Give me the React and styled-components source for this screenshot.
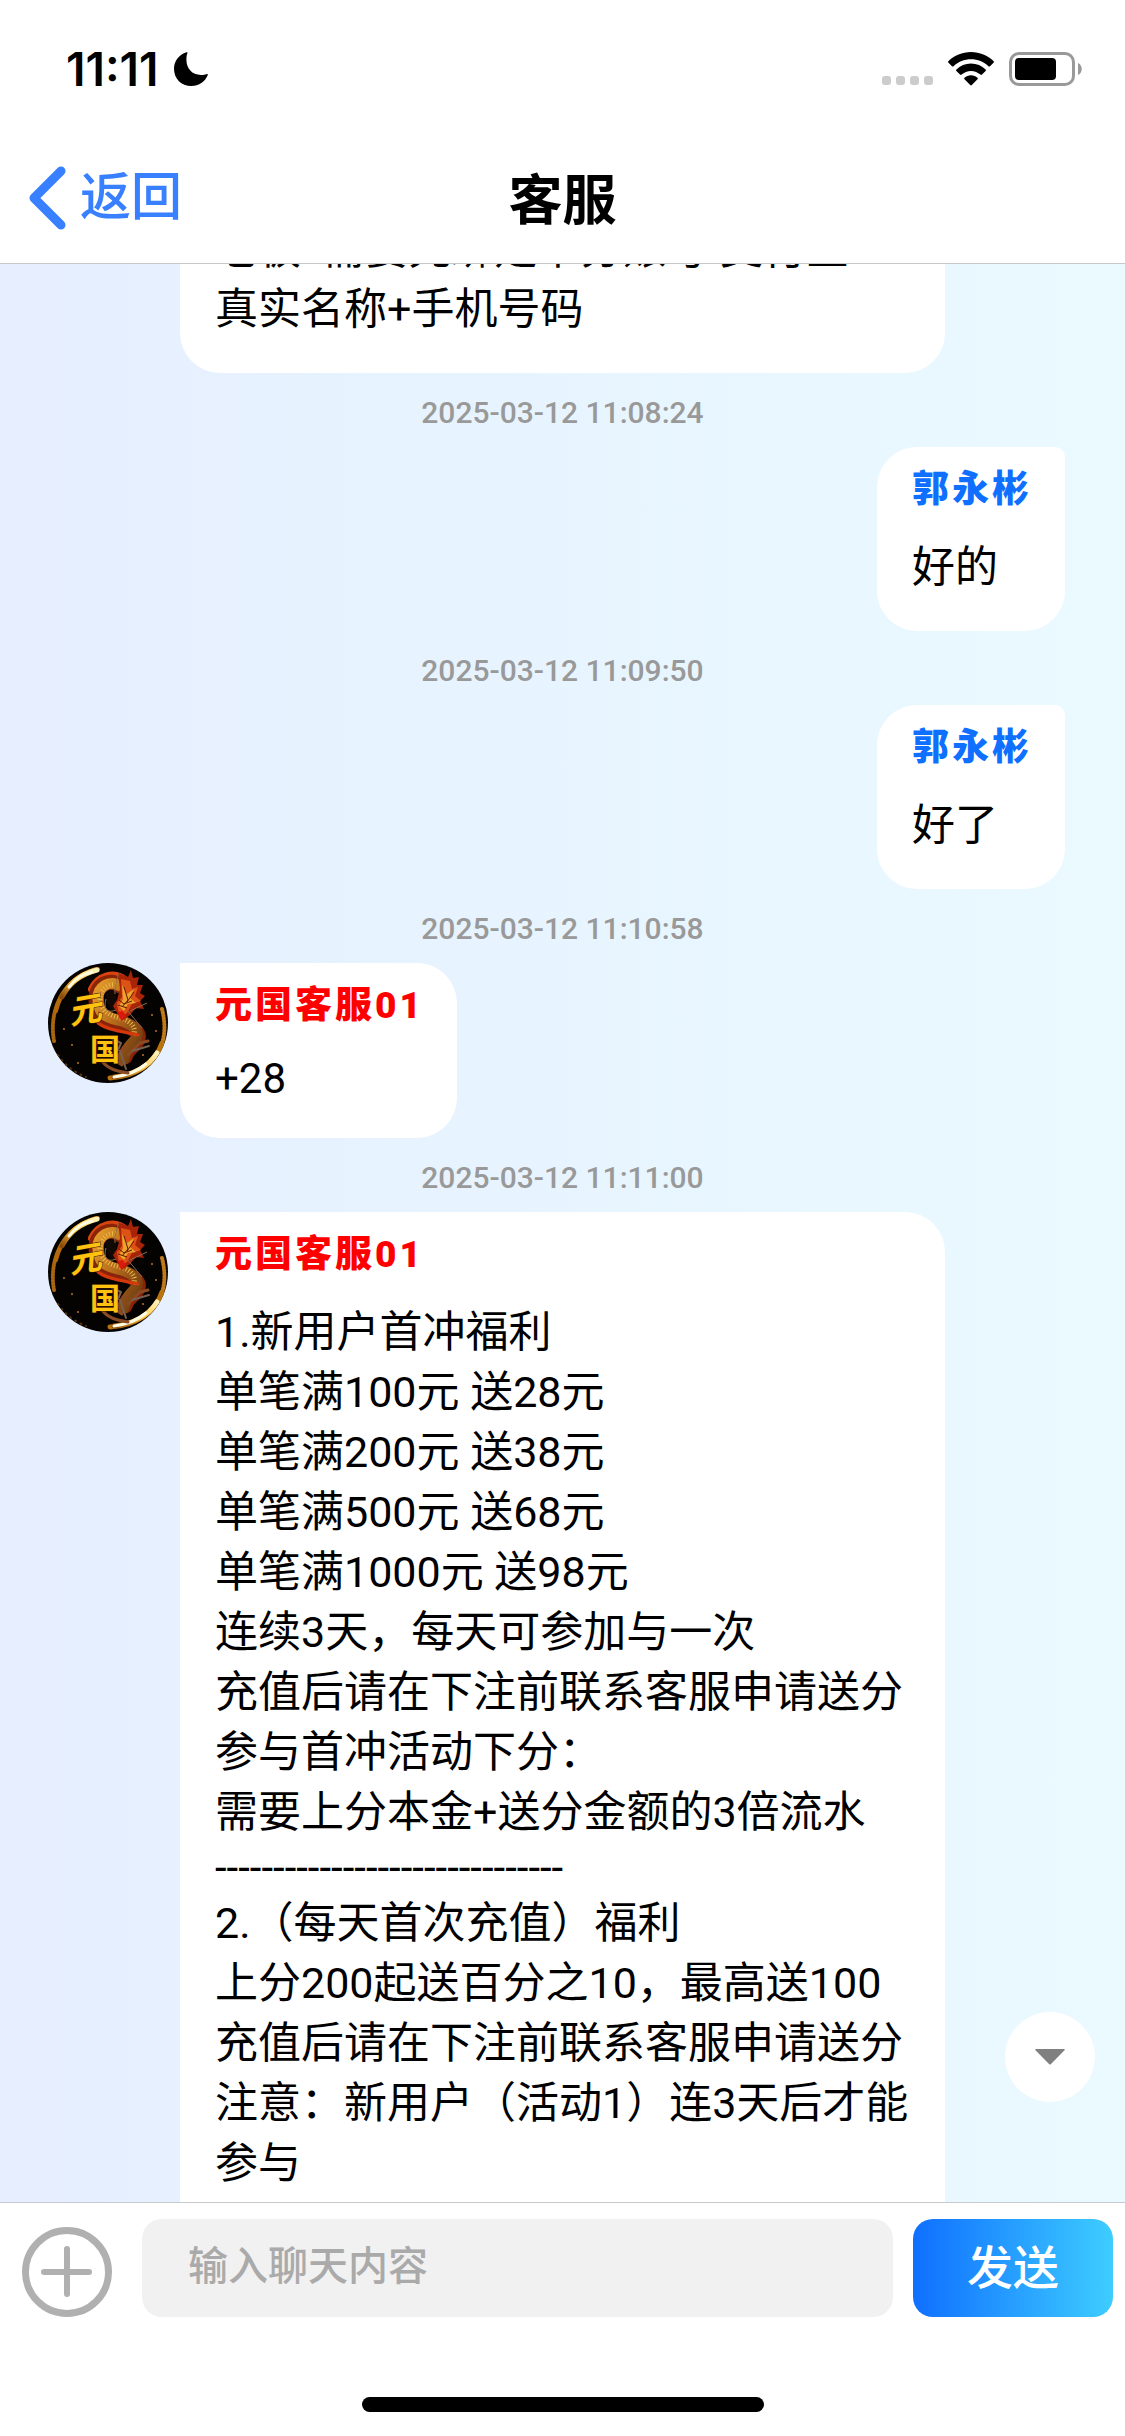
import React, { useLayoutEffect, useRef } from "react";
import styled, { createGlobalStyle } from "styled-components";

const GlobalStyle = createGlobalStyle`
    * {
        box-sizing: border-box;
    }

    body {
        margin: 0;
        background: #ffffff;
        color: #000000;
        font-family: Roboto, "Noto Sans CJK SC", sans-serif;
    }

    button, input {
        font-family: inherit;
        border: 0;
        padding: 0;
    }
`

const Page = styled.div`
    height: 100vh;
    display: flex;
    flex-direction: column;
`

/* status bar */

const StatusBar = styled.div`
    height: 132px;
    padding: 6px 42px 0 66px;
    display: flex;
    align-items: center;
    justify-content: space-between;
`
const StatusLeft = styled.div`
    display: flex;
    align-items: center;
    gap: 16px;
`
const Clock = styled.span`
    font-family: Inter, sans-serif;
    font-size: 46px;
    font-weight: 600;
    line-height: 52px;
`
const StatusRight = styled.div`
    display: flex;
    align-items: center;
    gap: 15px;
`

/* nav bar */

const NavBar = styled.header`
    height: 132px;
    padding: 0 24px;
    border-bottom: 1px solid #c8c9cc;
    display: grid;
    grid-template-columns: 1fr auto 1fr;
    align-items: center;
`
const BackLink = styled.a`
    display: flex;
    align-items: center;
    gap: 12px;
    color: #3880ff;
    font-size: 51px;
    font-weight: 500;
    line-height: 60px;
    text-decoration: none;
`
const Title = styled.h1`
    margin: 0;
    padding-top: 8px;
    font-size: 54px;
    font-weight: 700;
    line-height: 60px;
`

/* chat */

const ChatArea = styled.main`
    position: relative;
    flex: 1;
    min-height: 0;
    background: linear-gradient(90deg, #e6eeff 0%, #e7f4ff 45%, #eafaff 100%);
`
const Messages = styled.div`
    height: 100%;
    overflow-y: auto;
    scrollbar-width: none;
`
const Row = styled.div`
    padding: 0 60px 0 48px;
    display: flex;
    align-items: flex-start;
    justify-content: ${props => props.$mine ? "flex-end" : "flex-start"};
    gap: 12px;
`
const Bubble = styled.div`
    width: ${props => props.$wide ? "68vw" : "auto"};
    max-width: 68vw;
    padding: 18px 33px 34px 35px;
    background: #ffffff;
    border-radius: ${props => props.$mine ? "40px 10px 40px 40px" : "0 40px 40px 40px"};
`
const Name = styled.div`
    margin-bottom: 22px;
    color: ${props => props.$mine ? "#0f6fff" : "#ff0000"};
    font-size: 37px;
    font-weight: 900;
    line-height: 50px;
    letter-spacing: 3px;
`
const Line = styled.div`
    font-size: ${props => props.$latin ? "42px" : "43px"};
    line-height: ${props => props.$latin ? "51px" : "60px"};
    white-space: pre-wrap;
`
const Time = styled.div`
    height: 74px;
    padding-top: 6px;
    color: #999999;
    font-size: 30px;
    font-weight: 500;
    line-height: 68px;
    text-align: center;
`
const ScrollButton = styled.button`
    position: absolute;
    right: 30px;
    bottom: 100px;
    width: 90px;
    height: 90px;
    border-radius: 50%;
    background: #ffffff;
    display: grid;
    place-items: center;
`

/* composer */

const Composer = styled.form`
    padding: 16px 12px 0 22px;
    border-top: 1px solid #c8c9cc;
    display: flex;
    align-items: center;
`
const AddButton = styled.button`
    width: 90px;
    height: 90px;
    margin: 8px 30px 0 0;
    background: none;
    display: grid;
    place-items: center;
`
const ChatInput = styled.input`
    flex: 1;
    min-width: 0;
    height: 98px;
    padding: 0 46px 4px;
    border-radius: 20px;
    background: #f1f1f1;
    font-size: 40px;
    font-weight: 500;
    outline: none;

    &::placeholder {
        color: #aaaaaa;
        opacity: 1;
    }
`
const SendButton = styled.button`
    width: 200px;
    height: 98px;
    margin-left: 20px;
    padding-bottom: 8px;
    border-radius: 20px;
    background: linear-gradient(90deg, #0f6fff 0%, #3ecdff 100%);
    color: #ffffff;
    font-size: 46px;
    font-weight: 500;
`
const HomeArea = styled.div`
    height: 119px;
    padding-bottom: 24px;
    display: flex;
    align-items: flex-end;
    justify-content: center;
`
const HomeBar = styled.div`
    width: 402px;
    height: 15px;
    border-radius: 8px;
    background: #000000;
`

const AvatarSpace = styled.div`
    flex: none;
    width: 120px;
`
const AvatarIcon = styled.svg`
    flex: none;
    width: 120px;
    height: 120px;
    border-radius: 50%;
`

function Avatar () {
return (
<AvatarIcon viewBox="0 0 120 120" role="img" aria-label="元国">
    <defs>
        <linearGradient id="ring" x1="0" y1="1" x2="1" y2="0">
            <stop offset="0" stopColor="#8a4a08" />
            <stop offset="0.5" stopColor="#ffc845" />
            <stop offset="1" stopColor="#fff2b8" />
        </linearGradient>
        <linearGradient id="body" x1="0" y1="0" x2="1" y2="1">
            <stop offset="0" stopColor="#e39a2a" />
            <stop offset="0.5" stopColor="#b0661a" />
            <stop offset="1" stopColor="#6a3a10" />
        </linearGradient>
    </defs>
    <rect width="120" height="120" fill="#050302" />
    {/* golden ring */}
    <g fill="none" strokeLinecap="round">
        <path d="M6 78C1 50 12 17 48 6" stroke="#a8650f" strokeWidth="4" strokeDasharray="1 2" />
        <path d="M10 92C18 104 28 110 38 114" stroke="#5a340a" strokeWidth="2" strokeDasharray="1 5" />
        <path d="M114 46C118 62 117 76 111 88" stroke="#c07a18" strokeWidth="4" strokeDasharray="1 2" />
        <path d="M8 48C13 27 27 11 50 6" stroke="#b3690c" strokeWidth="4" />
        <path d="M14 34C21 20 33 11 49 7" stroke="url(#ring)" strokeWidth="5" />
        <path d="M21 24C27 16 35 11 44 9" stroke="#fffbe0" strokeWidth="3" />
        <path d="M114 80C107 101 87 114 62 115" stroke="#b9740f" strokeWidth="5" />
        <path d="M109 90C100 104 84 112 66 114" stroke="url(#ring)" strokeWidth="5" />
        <path d="M98 101C90 108 80 112 66 114" stroke="#fffbe0" strokeWidth="3" />
    </g>
    {/* dragon */}
    <g fill="none" strokeLinecap="round" strokeLinejoin="round">
        <path d="M78 18C66 7 50 14 44 26" stroke="#d8430f" strokeWidth="8" />
        <path d="M72 23C62 14 48 22 48 36C48 52 56 58 70 61C84 64 92 68 90 76C87 84 80 84 77 94" stroke="#8a2408" strokeWidth="15" />
        <path d="M72 23C62 16 49 24 50 36C50 49 56 54 70 57C86 61 92 68 88 76C82 82 78 86 76 96" stroke="url(#body)" strokeWidth="11" />
        <path d="M68 22C60 20 52 27 52 37C53 47 60 52 72 55C84 58 89 66 85 73" stroke="#e9b948" strokeWidth="5" strokeDasharray="1 2" strokeLinecap="butt" />
        <path d="M50 60C60 68 78 69 90 72" stroke="#d6380d" strokeWidth="3" />
        <path d="M76 84L68 98L74 102M80 92L92 80L100 78M54 98C60 106 68 108 80 110" stroke="#8a4a24" strokeWidth="3" />
        <path d="M64 76L73 80L70 87M84 88L101 83M72 88L78 106" stroke="#756052" strokeWidth="2" />
    </g>
    <path d="M58 32C60 26 66 26 68 30L68 48C62 48 58 42 58 32Z" fill="#120804" />
    <path d="M70 10L80 14L83 7L85 15L91 14L89 22L95 22L92 30L97 33L92 38L96 46L88 45L82 52L74 58L69 50L65 43L69 37L72 26Z" fill="#a82408" />
    <path d="M73 16L82 18L84 26L90 24L87 33L93 38L84 41L79 50L73 54L70 47L69 40L74 34Z" fill="#dd5216" />
    <path d="M74 22L79 31L86 26L82 35L88 40L80 41L76 48L71 43L75 36Z" fill="#eba52c" />
    <path d="M71 37L76 41L84 38M76 24L80 37L74 44M86 29L79 39M70 42L79 45" fill="none" stroke="#6a1404" strokeWidth="1" />
    <path d="M70 49L75 48L78 53L73 58Z" fill="#dc170b" />
    <path d="M68 47C59 51 55 45 58 36M79 47L94 65M82 48L99 40M67 31C66 20 71 16 70 10" fill="none" stroke="#8e6b50" strokeWidth="1" />
    <g fill="#ffc20e" stroke="#3a1c02" strokeWidth="1" paintOrder="stroke" fontFamily="'Noto Sans CJK SC', sans-serif" fontWeight="700">
        <text x="20" y="59" fontSize="33" fontStyle="italic" transform="rotate(-10 36 46)">元</text>
        <text x="42" y="97" fontSize="30">国</text>
    </g>
    <g fill="#b9751c">
        <circle cx="16" cy="66" r="1" />
        <circle cx="24" cy="82" r="1" />
        <circle cx="104" cy="52" r="1" />
        <circle cx="108" cy="68" r="1" />
        <circle cx="95" cy="92" r="1" />
        <circle cx="30" cy="100" r="1" />
    </g>
</AvatarIcon>
)
}

function MoonIcon () {
return (
<svg width="34" height="34" viewBox="0 0 34 34" aria-hidden="true">
    <path d="M12.500 0.300C13.400 0 13.700 0.500 13.400 1.300C12.700 3 12.400 5 12.400 7.600C12.400 16.600 18 23 27 23C29.400 23 31 22.700 32.400 22.200C33.600 21.800 34 22.300 33.700 23.200C31 29.800 25 34 17.400 34C7.200 34 0 26.700 0 16.700C0 9.200 5 2.800 12.500 0.300Z" />
</svg>
)
}

function StatusIcons () {
return (
<StatusRight aria-hidden="true">
    <svg width="51" height="34" viewBox="0 0 51 34" fill="#cccccc">
        <rect x="0" y="24" width="9" height="9" rx="3" />
        <rect x="14" y="24" width="9" height="9" rx="3" />
        <rect x="28" y="24" width="9" height="9" rx="3" />
        <rect x="42" y="24" width="9" height="9" rx="3" />
    </svg>
    <svg width="46" height="34" viewBox="0 0 46 34">
        <path d="M23 0C31.800 0 39.700 3.500 45.500 9.100Q46.300 9.900 45.500 10.700L42 14.200Q41.200 15 40.400 14.200C35.800 9.900 29.700 7.300 23 7.300S10.200 9.900 5.600 14.200Q4.800 15 4 14.200L0.500 10.700Q-0.300 9.900 0.500 9.100C6.300 3.500 14.200 0 23 0Z" />
        <path d="M23 11.600C28.700 11.600 33.800 13.800 37.600 17.400Q38.400 18.200 37.600 19L34 22.500Q33.200 23.300 32.400 22.600C29.900 20.300 26.600 18.900 23 18.900S16.100 20.300 13.600 22.600Q12.800 23.300 12 22.500L8.400 19Q7.600 18.200 8.400 17.400C12.200 13.800 17.300 11.600 23 11.600Z" />
        <path d="M23 23.300C25.500 23.300 27.800 24.200 29.500 25.700Q30.300 26.400 29.500 27.200L23.800 33Q23 33.800 22.200 33L16.500 27.200Q15.700 26.400 16.500 25.700C18.200 24.200 20.500 23.300 23 23.300Z" />
    </svg>
    <svg width="74" height="34" viewBox="0 0 74 34">
        <rect x="1.500" y="1.500" width="63" height="31" rx="8.500" fill="none" stroke="#999999" strokeWidth="3" />
        <rect x="6" y="6" width="41" height="22" rx="4" />
        <path d="M69 11C74 13 74 21 69 23Z" fill="#999999" />
    </svg>
</StatusRight>
)
}

const dashes = "------------------------------"

const messages = [
    {
        id: 1,
        wide: true,
        lines: ["老板  需要先绑定下分账号 支付宝", "真实名称+手机号码"],
    },
    { id: 2, mine: true, time: "2025-03-12 11:08:24", name: "郭永彬", lines: ["好的"] },
    { id: 3, mine: true, time: "2025-03-12 11:09:50", name: "郭永彬", lines: ["好了"] },
    { id: 4, time: "2025-03-12 11:10:58", name: "元国客服01", lines: ["+28"] },
    {
        id: 5,
        wide: true,
        time: "2025-03-12 11:11:00",
        name: "元国客服01",
        lines: [
            "1.新用户首冲福利",
            "单笔满100元 送28元",
            "单笔满200元 送38元",
            "单笔满500元 送68元",
            "单笔满1000元 送98元",
            "连续3天，每天可参加与一次",
            "充值后请在下注前联系客服申请送分",
            "参与首冲活动下分：",
            "需要上分本金+送分金额的3倍流水",
            dashes,
            "2.（每天首次充值）福利",
            "上分200起送百分之10，最高送100",
            "充值后请在下注前联系客服申请送分",
            "注意：新用户（活动1）连3天后才能参与",
            dashes,
        ],
    },
]

// lines with no Chinese text are set a little tighter
const isLatin = text => /^[\x20-\x7e]+$/.test(text)

function Message ({ message }) {
const { mine, wide, time, name, lines } = message
return (
<>
    {time && <Time>{time}</Time>}
    <Row $mine={mine}>
        {!mine && (name ? <Avatar /> : <AvatarSpace />)}
        <Bubble $mine={mine} $wide={wide}>
            {name && <Name $mine={mine}>{name}</Name>}
            {lines.map((line, i) => <Line key={i} $latin={isLatin(line)}>{line}</Line>)}
        </Bubble>
    </Row>
</>
)
}

function App () {
const list = useRef(null)

useLayoutEffect(() => {
    list.current.scrollTop = 63
}, [])

return (
<Page>
    <GlobalStyle />
    <StatusBar>
        <StatusLeft>
            <Clock>11:11</Clock>
            <MoonIcon />
        </StatusLeft>
        <StatusIcons />
    </StatusBar>
    <NavBar>
        <BackLink href="#back">
            <svg width="44" height="68" viewBox="0 0 44 68" fill="none" stroke="#3880ff" strokeWidth="9" strokeLinecap="round" strokeLinejoin="round" aria-hidden="true">
                <path d="M37 7L10 34L37 61" />
            </svg>
            返回
        </BackLink>
        <Title>客服</Title>
    </NavBar>
    <ChatArea>
        <Messages ref={list}>
            {messages.map(message => <Message key={message.id} message={message} />)}
        </Messages>
        <ScrollButton type="button" aria-label="滚动到底部">
            <svg width="30" height="16" viewBox="0 0 30 16" aria-hidden="true">
                <path d="M1 0H29Q30.500 0 29.500 1.200L16 15Q15 16 14 15L0.500 1.200Q-0.500 0 1 0Z" fill="#808080" />
            </svg>
        </ScrollButton>
    </ChatArea>
    <Composer onSubmit={e => e.preventDefault()}>
        <AddButton type="button" aria-label="更多">
            <svg width="90" height="90" viewBox="0 0 90 90" fill="none" stroke="#b0b0b0" strokeWidth="6" strokeLinecap="round" aria-hidden="true">
                <circle cx="45" cy="45" r="41.500" strokeWidth="7" />
                <path d="M45 22V67M22 45H67" />
            </svg>
        </AddButton>
        <ChatInput type="text" placeholder="输入聊天内容" aria-label="输入聊天内容" />
        <SendButton type="submit">发送</SendButton>
    </Composer>
    <HomeArea>
        <HomeBar />
    </HomeArea>
</Page>
)
}

export default App
